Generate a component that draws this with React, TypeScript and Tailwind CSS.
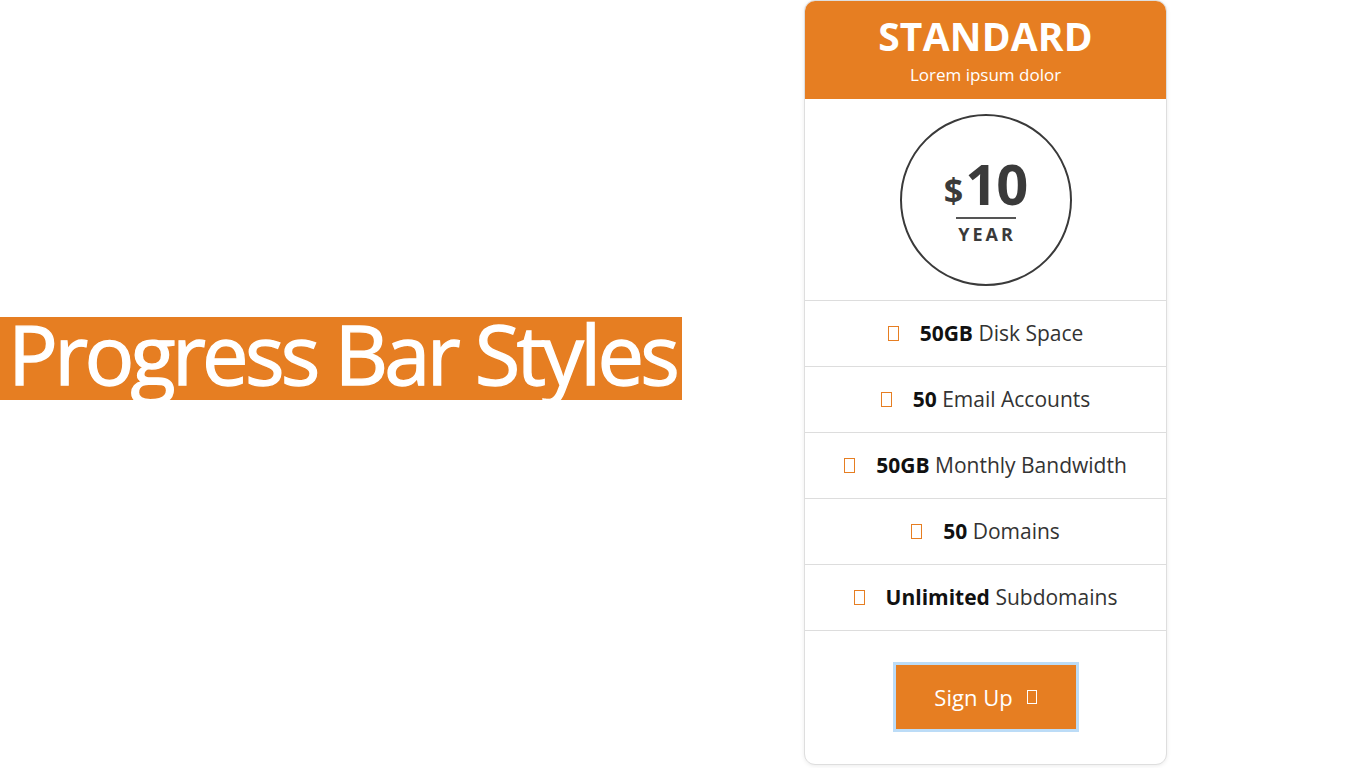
import React from 'react';

const FEATURES = [
  { strong: '50GB', rest: 'Disk Space' },
  { strong: '50', rest: 'Email Accounts' },
  { strong: '50GB', rest: 'Monthly Bandwidth' },
  { strong: '50', rest: 'Domains' },
  { strong: 'Unlimited', rest: 'Subdomains' },
];

function BoxIcon({ className }: { className: string }) {
  return <span className={`inline-block border ${className}`} />;
}

export default function App() {
  return (
    <div className="min-h-screen bg-white flex items-start font-['Open_Sans',sans-serif]">
      {/* ── Title banner ── */}
      <div className="w-[682px] pt-[317px] shrink-0">
        <div className="h-[83px] bg-[#e67e22] flex items-center pl-[8px]">
          <h1 className="text-white text-[83px] leading-none tracking-[-0.045em] whitespace-nowrap -mt-[12px] [-webkit-text-stroke:1.3px_white]">
            Progress Bar Styles
          </h1>
        </div>
      </div>

      {/* ── Pricing card ── */}
      <div className="ml-[122px] w-[363px] h-[765px] bg-white border border-[#dedede] rounded-[11px] shadow-[0_1px_4px_rgba(0,0,0,0.08)] overflow-hidden flex flex-col">
        {/* Header */}
        <div className="h-[98px] bg-[#e67e22] flex flex-col items-center pt-[10px] text-white">
          <h2 className="text-[39px] font-bold leading-[50px] tracking-[0.005em]">STANDARD</h2>
          <p className="text-[17px] leading-[22px] mt-[3px]">Lorem ipsum dolor</p>
        </div>

        {/* Price */}
        <div className="h-[202px] border-b border-[#dddddd] flex items-center justify-center">
          <div className="w-[172px] h-[172px] rounded-full border-2 border-[#3a3a3a] flex flex-col items-center justify-center text-[#3a3a3a]">
            <div className="flex items-end font-bold mt-[2px]">
              <span className="text-[34px] leading-none mb-[4px] mr-[2px]">$</span>
              <span className="text-[56px] leading-[56px] tracking-[-0.02em]">10</span>
            </div>
            <div className="w-[60px] h-[2px] bg-[#555] mt-[6px]" />
            <div className="text-[18px] font-bold tracking-[3px] leading-[24px] mt-[3px] pl-[3px]">YEAR</div>
          </div>
        </div>

        {/* Features */}
        {FEATURES.map((f) => (
          <div
            key={f.rest}
            className="h-[66px] border-b border-[#dddddd] flex items-center justify-center gap-[21px] text-[21px] text-[#333]"
          >
            <BoxIcon className="w-[11px] h-[15px] border-[#e67e22]" />
            <span>
              <strong className="font-bold text-[#111]">{f.strong}</strong> {f.rest}
            </span>
          </div>
        ))}

        {/* Action */}
        <div className="flex-1 flex justify-center pt-[31px]">
          <button className="w-[186px] h-[70px] border-[3px] border-[#bcdcf7] bg-[#e67e22] text-white text-[22px] flex items-center justify-center gap-[14px]">
            Sign Up
            <BoxIcon className="w-[10px] h-[14px] border-white" />
          </button>
        </div>
      </div>
    </div>
  );
}
